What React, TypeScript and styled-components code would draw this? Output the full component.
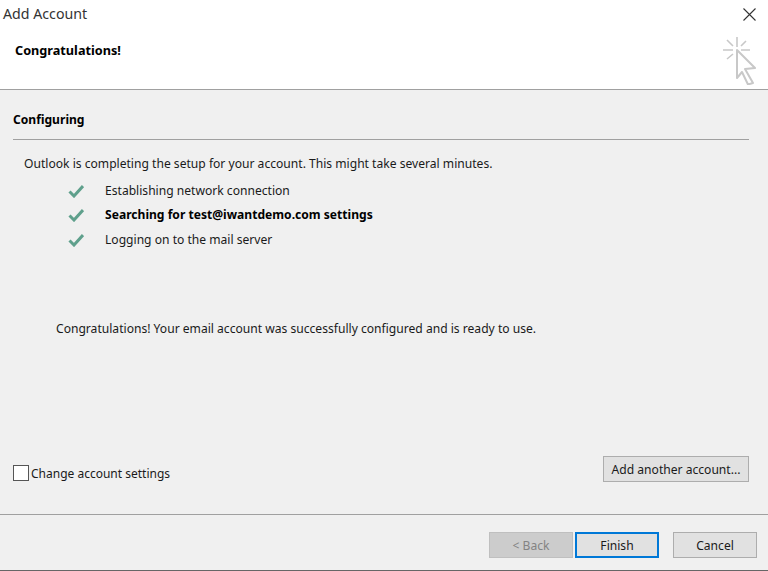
import React from "react";
import styled, { createGlobalStyle } from "styled-components";

const GlobalStyle = createGlobalStyle`
  html, body {
    margin: 0;
    padding: 0;
    background: #f0f0f0;
  }
`;

const Dialog = styled.div`
  width: 768px;
  height: 571px;
  display: flex;
  flex-direction: column;
  box-sizing: border-box;
  overflow: hidden;
  background: #f0f0f0;
  color: #1a1a1a;
  font-family: "Noto Sans", "Liberation Sans", sans-serif;
  font-size: 12.1px;
  border-bottom: 1px solid #666;
`;

const Header = styled.div`
  height: 90px;
  flex: none;
  box-sizing: border-box;
  background: #fff;
  border-bottom: 1px solid #a0a0a0;
  display: flex;
  flex-direction: column;
`;

const TitleBar = styled.div`
  display: flex;
  justify-content: space-between;
  padding: 4px 11px 0 3px;
`;

const WindowTitle = styled.div`
  font-size: 14.2px;
  line-height: 20px;
  color: #333;
`;

const CloseButton = styled.button`
  border: 0;
  padding: 0;
  margin: 0;
  background: none;
  width: 16px;
  height: 20px;
  display: flex;
  align-items: center;
  justify-content: center;
`;

const Banner = styled.div`
  display: flex;
  justify-content: space-between;
  padding: 0 12px 0 15px;
`;

const BannerTitle = styled.div`
  font-size: 12.7px;
  font-weight: 700;
  color: #000;
  line-height: 18px;
  margin-top: 17px;
`;

const CursorIcon = styled.svg`
  width: 34px;
  height: 50px;
  margin-top: 11px;
  flex: none;
`;

const Body = styled.div`
  flex: 1;
  display: flex;
  flex-direction: column;
  padding: 21px 19px 0 13px;
`;

const SectionTitle = styled.div`
  font-weight: 700;
  color: #000;
  line-height: 18px;
  padding-bottom: 10px;
  border-bottom: 1px solid #a0a0a0;
`;

const Intro = styled.div`
  margin: 15px 0 0 11px;
  line-height: 18px;
`;

const Steps = styled.div`
  display: flex;
  flex-direction: column;
  gap: 6.4px;
  margin: 9px 0 0 55px;
`;

const Step = styled.div<{ $active?: boolean }>`
  display: flex;
  align-items: center;
  gap: 21px;
  line-height: 18px;
  font-weight: ${(p) => (p.$active ? 700 : 400)};
  color: ${(p) => (p.$active ? "#000" : "#1a1a1a")};
`;

const Success = styled.div`
  margin: 71px 0 0 43px;
  line-height: 18px;
`;

const Options = styled.div`
  margin-top: auto;
  padding-bottom: 32px;
  display: flex;
  align-items: center;
  justify-content: space-between;
`;

const CheckRow = styled.label`
  display: flex;
  align-items: center;
  gap: 2px;
  margin-top: 8px;
  font-size: 12px;
`;

const CheckBox = styled.span`
  width: 14px;
  height: 14px;
  background: #fff;
  border: 1px solid #555;
`;

const Button = styled.button<{ $primary?: boolean }>`
  height: 26px;
  width: 84px;
  box-sizing: border-box;
  padding: 0;
  font: inherit;
  color: #1a1a1a;
  background: #e1e1e1;
  border: 1px solid #adadad;

  ${(p) =>
    p.$primary &&
    `
    border: 2px solid #0078d7;
  `}

  &:disabled {
    background: #cccccc;
    border-color: #bfbfbf;
    color: #838383;
  }
`;

const AddButton = styled(Button)`
  width: 146px;
`;

const Footer = styled.div`
  height: 56px;
  flex: none;
  box-sizing: border-box;
  border-top: 1px solid #a0a0a0;
  display: flex;
  justify-content: flex-end;
  padding: 17px 11px 0 0;
`;

const NavGroup = styled.div`
  display: flex;
  gap: 2px;
  margin-right: 14px;
`;

const Check = () => (
  <svg width="16" height="14" viewBox="0 0 16 14">
    <path d="M1.5 7.5 L6 12 L15 2" fill="none" stroke="#5fa08c" strokeWidth="3" />
  </svg>
);

const steps = [
  { label: "Establishing network connection" },
  { label: "Searching for test@iwantdemo.com settings", active: true },
  { label: "Logging on to the mail server" },
];

const App = () => {
  return (
    <Dialog>
      <GlobalStyle />
      <Header>
        <TitleBar>
          <WindowTitle>Add Account</WindowTitle>
          <CloseButton aria-label="Close">
            <svg width="13" height="13" viewBox="0 0 13 13">
              <path d="M0.5 0.5 L12.5 12.5 M12.5 0.5 L0.5 12.5" stroke="#333" strokeWidth="1.1" />
            </svg>
          </CloseButton>
        </TitleBar>
        <Banner>
          <BannerTitle>Congratulations!</BannerTitle>
          <CursorIcon viewBox="0 0 34 50" fill="none" stroke="#c8c8c8" strokeWidth="1.6">
            <path d="M15 2 V12 M1 15 H11 M19 15 H28 M5 5 L11 11 M24 6 L19 11 M5 24 L11 19" />
            <path
              d="M15 15 L33 33 L23 34 L31 48 L26 49.5 L20 37 L15 43 Z"
              strokeWidth="2"
              strokeLinejoin="round"
            />
          </CursorIcon>
        </Banner>
      </Header>
      <Body>
        <SectionTitle>Configuring</SectionTitle>
        <Intro>Outlook is completing the setup for your account. This might take several minutes.</Intro>
        <Steps>
          {steps.map((s) => (
            <Step key={s.label} $active={s.active}>
              <Check />
              {s.label}
            </Step>
          ))}
        </Steps>
        <Success>Congratulations! Your email account was successfully configured and is ready to use.</Success>
        <Options>
          <CheckRow>
            <CheckBox />
            Change account settings
          </CheckRow>
          <AddButton>Add another account...</AddButton>
        </Options>
      </Body>
      <Footer>
        <NavGroup>
          <Button disabled>&lt; Back</Button>
          <Button $primary>Finish</Button>
        </NavGroup>
        <Button>Cancel</Button>
      </Footer>
    </Dialog>
  );
};

export default App;
